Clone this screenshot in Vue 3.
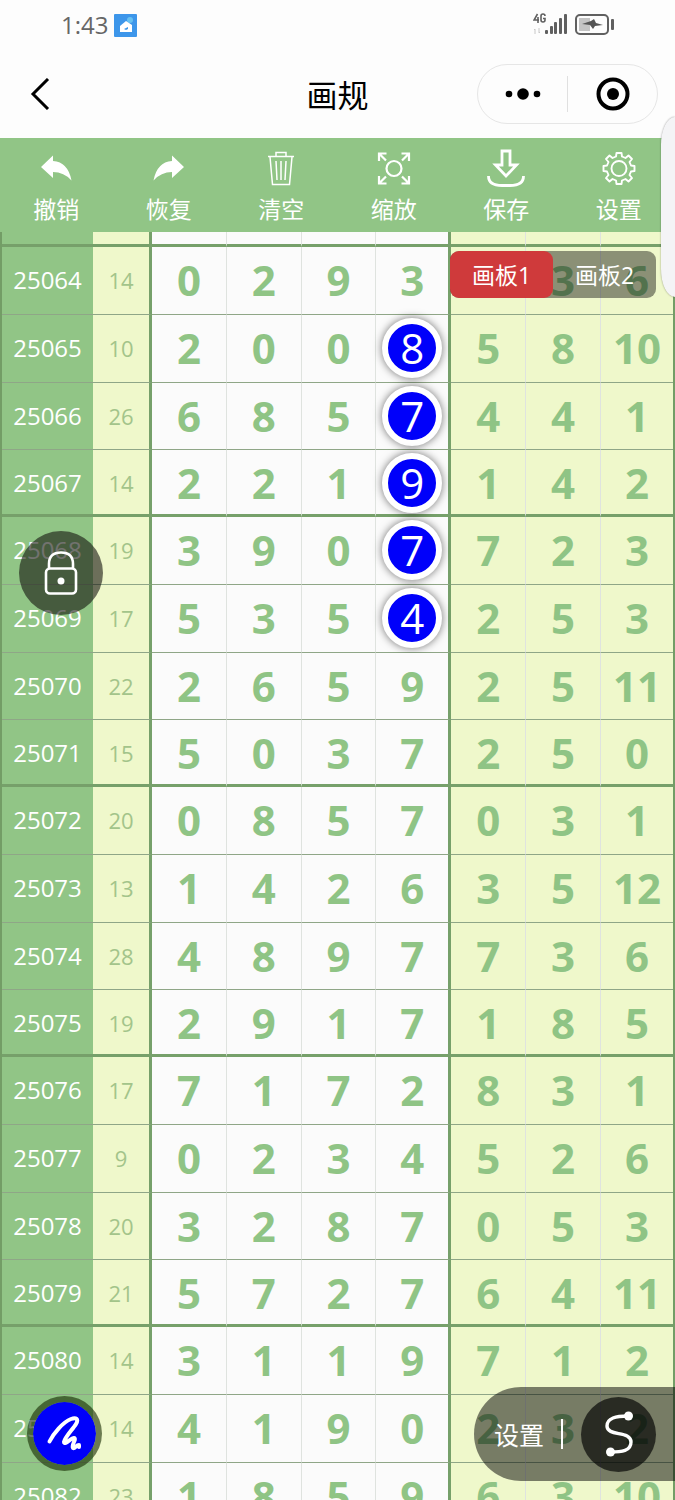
<script setup>
import { ref } from 'vue'

const source = [
  ['25064', 14, [0, 2, 9, 3], ['', 3, 6]],
  ['25065', 10, [2, 0, 0, 8], [5, 8, 10]],
  ['25066', 26, [6, 8, 5, 7], [4, 4, 1]],
  ['25067', 14, [2, 2, 1, 9], [1, 4, 2]],
  ['25068', 19, [3, 9, 0, 7], [7, 2, 3]],
  ['25069', 17, [5, 3, 5, 4], [2, 5, 3]],
  ['25070', 22, [2, 6, 5, 9], [2, 5, 11]],
  ['25071', 15, [5, 0, 3, 7], [2, 5, 0]],
  ['25072', 20, [0, 8, 5, 7], [0, 3, 1]],
  ['25073', 13, [1, 4, 2, 6], [3, 5, 12]],
  ['25074', 28, [4, 8, 9, 7], [7, 3, 6]],
  ['25075', 19, [2, 9, 1, 7], [1, 8, 5]],
  ['25076', 17, [7, 1, 7, 2], [8, 3, 1]],
  ['25077', 9, [0, 2, 3, 4], [5, 2, 6]],
  ['25078', 20, [3, 2, 8, 7], [0, 5, 3]],
  ['25079', 21, [5, 7, 2, 7], [6, 4, 11]],
  ['25080', 14, [3, 1, 1, 9], [7, 1, 2]],
  ['25081', 14, [4, 1, 9, 0], [2, 3, 2]],
  ['25082', 23, [1, 8, 5, 9], [6, 3, 10]]
]
const rows = source.map(([issue, sum, digits, extra]) => ({ issue, sum, digits, extra }))
const marked = new Set(['25065', '25066', '25067', '25068', '25069'])
const board = ref(1)
</script>

<template>
  <div class="app">
    <div class="status">
      <span class="clock">1:43</span>
      <svg class="weather" width="23" height="23" viewBox="0 0 23 23">
        <rect width="23" height="23" rx="1" fill="#3d96ea" />
        <circle cx="16" cy="6" r="3" fill="#67c1f2" />
        <path d="M6 18 V12 L12 7 L18 11 V18 Z" fill="#fff" />
        <path d="M10 15 l4-2 v2 l-2 1z" fill="#3d96ea" />
      </svg>
      <svg class="signal" width="84" height="26" viewBox="0 0 84 26">
        <g fill="none" stroke="#606060" stroke-width="1.6">
          <path d="M4.500 2 L1 8 H6 M5 5 V11" />
          <path d="M12 4 Q12 2 10 2 Q8 2 8 4 V8 Q8 10 10 10 Q12 10 12 8 V6.500 H10" />
        </g>
        <path d="M2 22v-5l-1 1 M6 16v5l1-1" stroke="#c8c8c8" fill="none" />
        <g fill="#606060">
          <rect x="12" y="18" width="3" height="4" rx="1" />
          <rect x="17" y="14" width="3" height="8" rx="1" />
          <rect x="21" y="10" width="3" height="12" rx="1" />
          <rect x="26" y="6" width="3" height="16" rx="1" />
          <rect x="31" y="2" width="3" height="20" rx="1" />
          <rect x="78" y="7" width="3" height="11" rx="1" />
        </g>
        <rect x="46" y="6" width="11" height="13" fill="#c4c4c4" />
        <rect x="43" y="3" width="32" height="19" rx="4" fill="none" stroke="#606060" stroke-width="2" />
        <path d="M49 12 L58 9 L61 7 L63 11 L70 13 L62 14 L60 17 L57 13 Z" fill="#555" />
      </svg>
    </div>

    <header class="nav">
      <button class="back" aria-label="返回">
        <svg width="20" height="32" viewBox="0 0 20 32"><path d="M18 1 L3 16 L18 31" fill="none" stroke="#000" stroke-width="3" /></svg>
      </button>
      <h1>画规</h1>
      <div class="capsule">
        <button aria-label="更多">
          <svg width="36" height="12" viewBox="0 0 36 12"><circle cx="4" cy="6" r="3.300" /><circle cx="18" cy="6" r="5.800" /><circle cx="32" cy="6" r="3.300" /></svg>
        </button>
        <button aria-label="关闭">
          <svg width="34" height="34" viewBox="0 0 34 34"><circle cx="17" cy="17" r="14.500" fill="none" stroke="#000" stroke-width="4" /><circle cx="17" cy="17" r="6" /></svg>
        </button>
      </div>
    </header>

    <nav class="tools">
      <button>
        <svg viewBox="0 0 40 40"><path d="M5 18 L17 6.500 V12 Q32 13 35.500 31.500 Q28 23 17 23 V29 Z" fill="#fff" /></svg>
        <span>撤销</span>
      </button>
      <button>
        <svg viewBox="0 0 40 40"><path d="M35 18 L23 6.500 V12 Q8 13 4.500 31.500 Q12 23 23 23 V29 Z" fill="#fff" /></svg>
        <span>恢复</span>
      </button>
      <button>
        <svg viewBox="0 0 40 40"><g fill="none" stroke="#fff" stroke-width="1.500"><path d="M7 7.500 H33 M15 7 V3.500 H25 V7 M9 8 L11.500 35.500 H28.500 L31 8 M15 12 L16 31 M20 12 V31 M25 12 L24 31" /></g></svg>
        <span>清空</span>
      </button>
      <button>
        <svg viewBox="0 0 40 40"><g fill="none" stroke="#fff" stroke-width="2.200"><circle cx="20" cy="19.500" r="7.500" /><path d="M5 12 V4.500 H12.500 M5 4.500 L12 11.500 M27.500 4.500 H35 V12 M35 4.500 L28 11.500 M5 27 V34.500 H12.500 M5 34.500 L12 27.500 M27.500 34.500 H35 V27 M35 34.500 L28 27.500" /></g></svg>
        <span>缩放</span>
      </button>
      <button>
        <svg viewBox="0 0 40 40"><path d="M16 2 H24 V16 H30.500 L20 27 L9.500 16 H16 Z M2.500 27 Q2.500 36.500 16 36.500 H24 Q37.500 36.500 37.500 27" fill="none" stroke="#fff" stroke-width="2.800" /></svg>
        <span>保存</span>
      </button>
      <button>
        <svg viewBox="0 0 40 40">
          <g fill="none" stroke="#fff" stroke-width="1.900" stroke-linejoin="round"><circle cx="20" cy="19.500" r="7.500" />
          <path d="M17.500 4 H22.500 L23 7.500 L26.500 9 L29.500 6.500 L33 10 L30.500 13 L32 16.500 L35.500 17 V22 L32 22.500 L30.500 26 L33 29 L29.500 32.500 L26.500 30 L23 31.500 L22.500 35 H17.500 L17 31.500 L13.500 30 L10.500 32.500 L7 29 L9.500 26 L8 22.500 L4.500 22 V17 L8 16.500 L9.500 13 L7 10 L10.500 6.500 L13.500 9 L17 7.500 Z" /></g>
        </svg>
        <span>设置</span>
      </button>
    </nav>

    <main class="sheet">
      <table>
        <colgroup>
          <col class="c-issue" /><col class="c-sum" />
          <col v-for="n in 6" :key="n" class="c-digit" /><col />
        </colgroup>
        <tbody>
          <tr class="cut"><th></th><td class="sum"></td><td v-for="n in 4" :key="n" class="digit"></td><td v-for="n in 3" :key="n + 4" class="extra"></td></tr>
          <tr v-for="row in rows" :key="row.issue">
            <th scope="row">{{ row.issue }}</th>
            <td class="sum">{{ row.sum }}</td>
            <td v-for="(d, i) in row.digits" :key="'d' + i" class="digit">
              <span v-if="i === 3 && marked.has(row.issue)" class="ball">{{ d }}</span>
              <template v-else>{{ d }}</template>
            </td>
            <td v-for="(e, i) in row.extra" :key="'e' + i" class="extra">{{ e }}</td>
          </tr>
        </tbody>
      </table>
      <div class="boards">
        <button :class="{ on: board === 1 }" @click="board = 1">画板1</button>
        <button :class="{ on: board === 2 }" @click="board = 2">画板2</button>
      </div>
    </main>

    <div class="handle"></div>

    <button class="lock" aria-label="锁定">
      <svg width="36" height="48" viewBox="0 0 36 48"><g fill="none" stroke="#fff" stroke-width="2.600"><rect x="3" y="19.500" width="30" height="25" rx="4" /><path d="M6 19 V15 Q6 3.500 18 3.500 Q30 3.500 30 15 V19" /></g><circle cx="18" cy="32" r="3.500" fill="#fff" /></svg>
    </button>

    <button class="pen" aria-label="画笔">
      <svg width="40" height="40" viewBox="0 0 40 40"><path d="M4.500 27.500 C8 20 18 8 26 5 C31 3 34 5 31 10 C28 15 20 23 19 28 C19 32 27 23 29 24 C32 25 26 31 28 34 C30 35 31 31 34 31 V33" fill="none" stroke="#fff" stroke-width="4" stroke-linecap="round" stroke-linejoin="round" /></svg>
    </button>

    <div class="dock">
      <button class="dock-set">设置</button>
      <i></i>
      <button class="curve" aria-label="曲线">
        <svg width="34" height="48" viewBox="0 0 34 48"><path d="M26 6 C14 6 5 8 5 16 C5 27 29 20 29 32 C29 41 20 42 8 42" fill="none" stroke="#fff" stroke-width="3.400" /><circle cx="26.500" cy="6" r="4.500" fill="#fff" /><circle cx="8.500" cy="42" r="4.500" fill="#fff" /></svg>
      </button>
    </div>
  </div>
</template>

<style>
body {
  overflow: hidden;
}
</style>

<style scoped>
.app {
  position: relative;
  display: flex;
  flex-direction: column;
  height: 100vh;
  overflow: hidden;
  background: #fdfdfd;
  font-family: "Open Sans", "Noto Sans", "Noto Sans CJK SC", sans-serif;
}
button {
  margin: 0;
  padding: 0;
  border: 0;
  background: none;
  color: inherit;
  font: inherit;
}
svg {
  display: block;
}
.status {
  display: flex;
  align-items: center;
  height: 50px;
  padding: 0 58px 0 61px;
  flex: none;
  box-sizing: border-box;
}
.clock {
  color: #666;
  font-size: 24px;
  line-height: 50px;
}
.weather {
  margin-left: 6px;
}
.signal {
  margin-left: auto;
}
.nav {
  display: flex;
  position: relative;
  align-items: center;
  justify-content: space-between;
  height: 88px;
  flex: none;
  padding: 0 17px 0 30px;
}
.nav h1 {
  position: absolute;
  left: 0;
  right: 0;
  margin: 0;
  text-align: center;
  font-family: "Noto Sans CJK SC", sans-serif;
  font-size: 31px;
  font-weight: 400;
  line-height: 44px;
  pointer-events: none;
}
.capsule {
  display: flex;
  align-items: center;
  width: 179px;
  height: 58px;
  border: 1px solid #e6e6e6;
  border-radius: 30px;
}
.capsule button {
  display: flex;
  flex: 1;
  align-items: center;
  justify-content: center;
  height: 36px;
}
.capsule button + button {
  border-left: 1px solid #e0e0e0;
}
.tools {
  display: grid;
  grid-template-columns: repeat(6, 1fr);
  height: 94px;
  flex: none;
  background: #91c586;
  color: #fff;
  font-family: "Noto Sans CJK SC", sans-serif;
  font-size: 23px;
  line-height: 32px;
}
.tools button {
  display: flex;
  flex-direction: column;
  align-items: center;
  padding-top: 11px;
}
.tools svg {
  width: 40px;
  height: 40px;
  margin-bottom: 3px;
}
.sheet {
  position: relative;
  flex: 1;
  min-height: 0;
  overflow: hidden;
}
table {
  width: 100%;
  table-layout: fixed;
  border-spacing: 0;
  border-left: 2px solid #739d66;
  border-right: 2px solid #739d66;
}
.c-issue {
  width: 91px;
}
.c-sum {
  width: 59px;
}
.c-digit {
  width: 11.150%;
}
tr {
  height: 67px;
}
tr:nth-child(4n + 2),
tr:nth-child(4n + 3) {
  height: 68px;
}
tr.cut {
  height: 15px;
}
th,
td {
  box-sizing: border-box;
  padding: 0 0 1px;
  border-bottom: 1px solid #8fa687;
  text-align: center;
  vertical-align: middle;
}
tr:nth-child(4n + 1) > * {
  padding: 2px 0 0;
  border-bottom: 3px solid #76a06a;
}
tr.cut > * {
  padding: 0;
}
th {
  background: #91c586;
  color: #fff;
  font-size: 24px;
  font-weight: 400;
  line-height: 32px;
}
.sum {
  border-right: 3px solid #76a06a;
  background: #eff8cb;
  color: #a3c48a;
  font-size: 22px;
  line-height: 32px;
}
.digit,
.extra {
  border-right: 1px solid #dfe3df;
  background: #fbfbfb;
  color: #8fc485;
  font-size: 42px;
  font-weight: 700;
  line-height: 56px;
}
.digit:nth-child(6) {
  border-right: 3px solid #76a06a;
}
.extra {
  background: #eff8cb;
}
.extra:last-child {
  border-right: 0;
}
.ball {
  display: block;
  width: 48px;
  height: 48px;
  margin: 0 auto;
  border: 6px solid #fff;
  border-radius: 50%;
  background: #0000fa;
  box-shadow: 0 0 8px rgba(0, 0, 0, 0.55);
  color: #fff;
  font-size: 42px;
  font-weight: 400;
  line-height: 48px;
}
.boards {
  position: absolute;
  top: 19px;
  right: 19px;
  display: flex;
  height: 47px;
  border-radius: 9px;
  background: rgba(0, 0, 0, 0.42);
  color: #fff;
  font-family: "Open Sans", "Noto Sans CJK SC", sans-serif;
  font-size: 23px;
}
.boards button {
  width: 103px;
  padding-bottom: 2px;
  border-radius: 9px;
}
.boards .on {
  background: #cf3a3b;
}
.handle {
  position: absolute;
  top: 117px;
  right: 0;
  width: 14px;
  height: 180px;
  border-radius: 14px 0 0 14px / 28px 0 0 28px;
  background: #f4f4f6;
  box-shadow: 0 0 2px rgba(0, 0, 0, 0.4);
}
.lock,
.pen,
.curve {
  display: flex;
  align-items: center;
  justify-content: center;
  border-radius: 50%;
}
.lock {
  position: absolute;
  left: 19px;
  top: 531px;
  width: 84px;
  height: 84px;
  background: rgba(20, 20, 15, 0.6);
}
.pen {
  position: absolute;
  left: 27px;
  bottom: 29px;
  width: 75px;
  height: 75px;
  border: 6px solid rgba(20, 40, 0, 0.6);
  background: #0000fa;
  background-clip: padding-box;
}
.dock {
  position: absolute;
  right: 0;
  bottom: 19px;
  display: flex;
  align-items: center;
  height: 94px;
  padding: 0 19px 0 20px;
  border-radius: 47px 0 0 47px;
  background: rgba(0, 0, 0, 0.5);
  color: #fff;
  font-family: "Noto Sans CJK SC", sans-serif;
  font-size: 25px;
}
.dock i {
  width: 2px;
  height: 30px;
  margin: 0 18px 0 17px;
  background: #fff;
}
.curve {
  width: 75px;
  height: 75px;
  background: rgba(0, 0, 0, 0.65);
}
</style>
